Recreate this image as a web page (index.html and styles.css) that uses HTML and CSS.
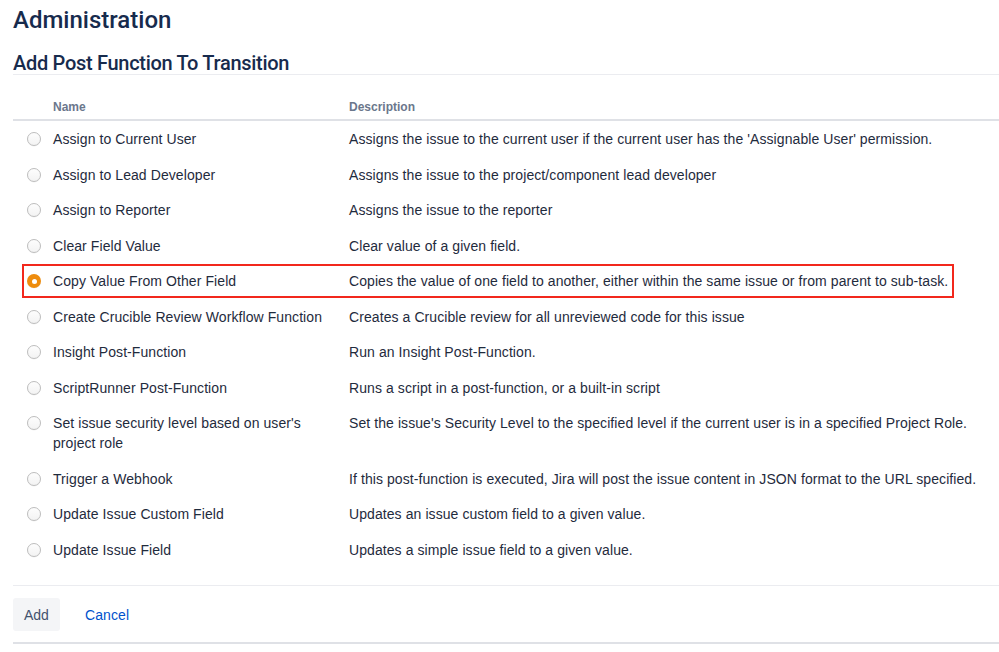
FILE: index.html
```html
<!DOCTYPE html>
<html lang="en">
<head>
<meta charset="utf-8">
<title>Add Post Function To Transition</title>
<link rel="stylesheet" href="styles.css">
</head>
<body>
<div class="page">
  <h1 class="title">Administration</h1>
  <h2 class="subtitle">Add Post Function To Transition</h2>
  <div class="table">
    <div class="row head">
      <div class="cell"></div>
      <div class="cell">Name</div>
      <div class="cell">Description</div>
    </div>
    <div class="row"><div class="cell"><span class="radio"></span></div><div class="cell">Assign to Current User</div><div class="cell">Assigns the issue to the current user if the current user has the 'Assignable User' permission.</div></div>
    <div class="row"><div class="cell"><span class="radio"></span></div><div class="cell">Assign to Lead Developer</div><div class="cell">Assigns the issue to the project/component lead developer</div></div>
    <div class="row"><div class="cell"><span class="radio"></span></div><div class="cell">Assign to Reporter</div><div class="cell">Assigns the issue to the reporter</div></div>
    <div class="row"><div class="cell"><span class="radio"></span></div><div class="cell">Clear Field Value</div><div class="cell">Clear value of a given field.</div></div>
    <div class="row highlighted"><div class="cell"><span class="radio checked"></span></div><div class="cell">Copy Value From Other Field</div><div class="cell">Copies the value of one field to another, either within the same issue or from parent to sub-task.</div></div>
    <div class="row"><div class="cell"><span class="radio"></span></div><div class="cell">Create Crucible Review Workflow Function</div><div class="cell">Creates a Crucible review for all unreviewed code for this issue</div></div>
    <div class="row"><div class="cell"><span class="radio"></span></div><div class="cell">Insight Post-Function</div><div class="cell">Run an Insight Post-Function.</div></div>
    <div class="row"><div class="cell"><span class="radio"></span></div><div class="cell">ScriptRunner Post-Function</div><div class="cell">Runs a script in a post-function, or a built-in script</div></div>
    <div class="row"><div class="cell"><span class="radio"></span></div><div class="cell">Set issue security level based on user's project role</div><div class="cell">Set the issue's Security Level to the specified level if the current user is in a specified Project Role.</div></div>
    <div class="row"><div class="cell"><span class="radio"></span></div><div class="cell">Trigger a Webhook</div><div class="cell">If this post-function is executed, Jira will post the issue content in JSON format to the URL specified.</div></div>
    <div class="row"><div class="cell"><span class="radio"></span></div><div class="cell">Update Issue Custom Field</div><div class="cell">Updates an issue custom field to a given value.</div></div>
    <div class="row"><div class="cell"><span class="radio"></span></div><div class="cell">Update Issue Field</div><div class="cell">Updates a simple issue field to a given value.</div></div>
  </div>
  <div class="footer">
    <button class="btn">Add</button>
    <a class="link" href="#">Cancel</a>
  </div>
</div>
</body>
</html>
```
FILE: styles.css
```css
html, body {
  margin: 0;
  padding: 0;
  background: #ffffff;
}
body {
  font-family: "Liberation Sans", Arial, sans-serif;
  color: #172b4d;
  font-size: 14px;
  overflow: hidden;
}
.page {
  padding: 6px 0 0 13px;
}
.title {
  margin: 0;
  font-family: Roboto, "Liberation Sans", sans-serif;
  font-size: 24px;
  line-height: 28px;
  font-weight: 500;
  letter-spacing: 0;
  color: #172b4d;
}
.subtitle {
  margin: 18px 0 0;
  font-family: Roboto, "Liberation Sans", sans-serif;
  font-size: 20px;
  line-height: 22px;
  font-weight: 500;
  letter-spacing: -0.3px;
  color: #172b4d;
  border-bottom: 1px solid #ebecf0;
}
.table {
  display: flex;
  flex-direction: column;
}
.row {
  display: grid;
  grid-template-columns: 40px 296px 1fr;
  position: relative;
}
.row .cell {
  padding: 8px 10px 7.5px 0;
  line-height: 20px;
  letter-spacing: 0.08px;
  color: #1f2b3d;
}
.row .cell:first-child {
  padding-right: 0;
  display: flex;
  align-items: flex-start;
}
.row.head {
  border-bottom: 2px solid #dfe1e6;
}
.row.head .cell {
  padding: 24px 10px 4px 0;
  font-size: 12px;
  line-height: 16px;
  font-weight: bold;
  letter-spacing: 0;
  color: #6b778c;
}
.radio {
  box-sizing: border-box;
  width: 14px;
  height: 14px;
  margin: 3px 0 0 14px;
  border-radius: 50%;
  border: 1px solid #bdbdbd;
  background: linear-gradient(#fdfdfd, #f3f3f3);
  box-shadow: 0 0.5px 0.5px rgba(0,0,0,0.06);
}
.radio.checked {
  border: none;
  background: #ee8c0d;
  display: flex;
  align-items: center;
  justify-content: center;
}
.radio.checked::after {
  content: "";
  width: 5px;
  height: 5px;
  border-radius: 50%;
  background: #ffffff;
}
.highlighted::after {
  content: "";
  position: absolute;
  left: 9px;
  top: 1px;
  width: 932px;
  height: 34px;
  box-sizing: border-box;
  border: 2px solid #f2281c;
  pointer-events: none;
}
.footer {
  margin-top: 18px;
  border-top: 1px solid #ebecf0;
  border-bottom: 2px solid #dfe1e6;
  padding: 12px 0 11px;
  display: flex;
  align-items: center;
  gap: 15px;
}
.btn {
  font-family: "Liberation Sans", Arial, sans-serif;
  font-size: 14px;
  height: 33px;
  padding: 0 11px;
  border: none;
  border-radius: 3px;
  background: #f4f5f7;
  color: #42526e;
}
.link {
  padding: 0 10px;
  color: #0052cc;
  text-decoration: none;
  font-size: 14px;
  letter-spacing: 0.1px;
}
```
